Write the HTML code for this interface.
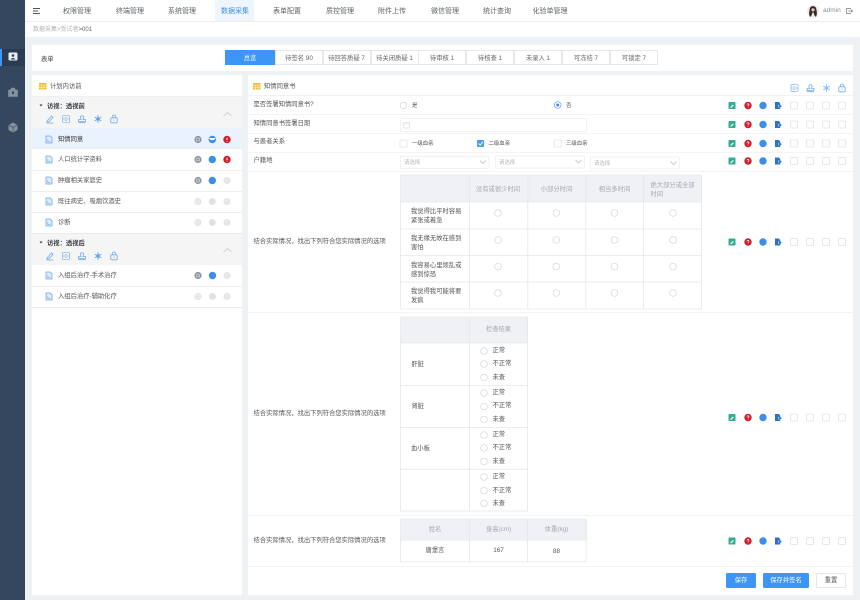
<!DOCTYPE html>
<html lang="zh">
<head>
<meta charset="utf-8">
<title>数据采集</title>
<style>
html,body{margin:0;padding:0;width:860px;height:600px;overflow:hidden;background:#eff2f5}
body{font-family:"Liberation Sans","Noto Sans CJK SC",sans-serif;font-size:7px;color:#555;position:relative}
#w{position:absolute;left:0;top:0;width:860px;height:600px;filter:blur(.25px)}
.b{position:absolute;background:#fff}
.t{position:absolute;white-space:nowrap;line-height:10px;height:10px;font-size:6.3px;color:#555;margin-top:1.5px}
.n{font-size:7px;color:#5f6368}
.c{transform:translateX(-50%)}
.h{color:#a3a8b3}
.d{color:#3a3f47}
.s{font-size:5.4px}
.g{color:#b5b8bd;font-size:5.4px}
svg{position:absolute;left:0;top:0;overflow:visible}
.tab{position:absolute;top:50px;height:15px;line-height:15px;text-align:center;background:#fff;border:1px solid #e6e8ec;box-sizing:border-box;font-size:6.3px;color:#666;width:48px}
.btn{position:absolute;top:573px;height:15px;line-height:15px;text-align:center;background:#3c96f5;color:#fff;border-radius:1.5px;font-size:6.3px}
</style>
</head>
<body>
<div id="w">
<div class="b" style="left:0;top:0;width:25px;height:600px;background:#34475e"></div>
<div class="b" style="left:0;top:49px;width:25px;height:17px;background:#2b3c50"></div>
<div class="b" style="left:0;top:49px;width:2px;height:17px;background:#3c96f5"></div>

<div class="b" style="left:25px;top:0;width:835px;height:37px"></div>
<div class="b" style="left:215px;top:0;width:39px;height:21px;background:#eef5fd"></div>
<div class="b" style="left:25px;top:21px;width:835px;height:1px;background:#eceef1"></div>

<div class="t c n" style="left:77px;top:5px">权限管理</div>
<div class="t c n" style="left:130px;top:5px">终端管理</div>
<div class="t c n" style="left:182px;top:5px">系统管理</div>
<div class="t c n" style="left:235px;top:5px;color:#3c8fe8">数据采集</div>
<div class="t c n" style="left:287px;top:5px">表单配置</div>
<div class="t c n" style="left:340px;top:5px">质控管理</div>
<div class="t c n" style="left:392px;top:5px">附件上传</div>
<div class="t c n" style="left:445px;top:5px">微信管理</div>
<div class="t c n" style="left:497px;top:5px">统计查询</div>
<div class="t c n" style="left:550px;top:5px">化验单管理</div>
<div class="t" style="left:823px;top:4px;font-size:6.5px;color:#8a8f96">admin</div>
<div class="t" style="left:33px;top:23.500px;font-size:6px;color:#b0b3b8">数据采集&gt;受试者<span style="color:#666">&gt;001</span></div>

<div class="b" style="left:32px;top:45px;width:821px;height:26px"></div>
<div class="t d" style="left:41px;top:53px">表单</div>
<div class="tab" style="left:225px;width:50px;background:#3c96f5;border-color:#3c96f5;color:#fff">总览</div>
<div class="tab" style="left:275px">待签名 90</div>
<div class="tab" style="left:322.500px">待回答质疑 7</div>
<div class="tab" style="left:370.500px">待关闭质疑 1</div>
<div class="tab" style="left:418px">待审核 1</div>
<div class="tab" style="left:466px">待核查 1</div>
<div class="tab" style="left:514px">未录入 1</div>
<div class="tab" style="left:562px">可冻结 7</div>
<div class="tab" style="left:610px">可锁定 7</div>

<!-- left panel -->
<div class="b" style="left:32px;top:75px;width:210px;height:520px"></div>
<div class="b" style="left:32px;top:96px;width:210px;height:1px;background:#eef0f2"></div>
<div class="b" style="left:32px;top:97px;width:210px;height:31px;background:#f5f5f6"></div>
<div class="b" style="left:32px;top:128px;width:210px;height:20px;background:#eaf3fd"></div>
<div class="b" style="left:32px;top:233px;width:210px;height:32px;background:#f5f5f6"></div>
<div class="b" style="left:32px;top:148px;width:210px;height:1px;background:#edeff2"></div>
<div class="b" style="left:32px;top:170px;width:210px;height:1px;background:#edeff2"></div>
<div class="b" style="left:32px;top:191px;width:210px;height:1px;background:#edeff2"></div>
<div class="b" style="left:32px;top:212px;width:210px;height:1px;background:#edeff2"></div>
<div class="b" style="left:32px;top:233px;width:210px;height:1px;background:#e8eaed"></div>
<div class="b" style="left:32px;top:286px;width:210px;height:1px;background:#edeff2"></div>
<div class="b" style="left:32px;top:307px;width:210px;height:1px;background:#e8eaed"></div>

<div class="t" style="left:50px;top:80px">计划内访前</div>
<div class="t d" style="left:47px;top:100px;font-weight:bold">访视：透视前</div>
<div class="t d" style="left:47px;top:237px;font-weight:bold">访视：透视后</div>
<div class="t d" style="left:58px;top:133px;color:#333">知情同意</div>
<div class="t" style="left:58px;top:153px">人口统计学资料</div>
<div class="t" style="left:58px;top:174px">肿瘤相关家庭史</div>
<div class="t" style="left:58px;top:195px">既往病史、吸烟饮酒史</div>
<div class="t" style="left:58px;top:216px">诊断</div>
<div class="t" style="left:58px;top:269px">入组后治疗-手术治疗</div>
<div class="t" style="left:58px;top:290.500px">入组后治疗-辅助化疗</div>

<!-- right panel -->
<div class="b" style="left:248px;top:75px;width:605px;height:520px"></div>
<div class="t" style="left:264px;top:80px">知情同意书</div>
<div class="b" style="left:248px;top:95px;width:605px;height:1px;background:#f1f2f4"></div>
<div class="b" style="left:248px;top:114px;width:605px;height:1px;background:#f3f4f6"></div>
<div class="b" style="left:248px;top:133px;width:605px;height:1px;background:#f3f4f6"></div>
<div class="b" style="left:248px;top:152px;width:605px;height:1px;background:#f3f4f6"></div>
<div class="b" style="left:248px;top:171px;width:605px;height:1px;background:#f3f4f6"></div>
<div class="b" style="left:248px;top:312px;width:605px;height:1px;background:#f3f4f6"></div>
<div class="b" style="left:248px;top:515px;width:605px;height:1px;background:#f3f4f6"></div>
<div class="b" style="left:248px;top:566px;width:605px;height:1px;background:#f3f4f6"></div>

<div class="t" style="left:253.500px;top:98.500px">是否签署知情同意书?</div>
<div class="t" style="left:253.500px;top:117.500px">知情同意书签署日期</div>
<div class="t" style="left:253.500px;top:135.500px">与患者关系</div>
<div class="t" style="left:253.500px;top:154.500px">户籍地</div>
<div class="t" style="left:253.500px;top:235.500px">结合实际情况，找出下列符合您实际情况的选项</div>
<div class="t" style="left:253.500px;top:407.500px">结合实际情况，找出下列符合您实际情况的选项</div>
<div class="t" style="left:253.500px;top:534.500px">结合实际情况，找出下列符合您实际情况的选项</div>

<div class="t s" style="left:412px;top:99px">是</div>
<div class="t s" style="left:566px;top:99px">否</div>
<div class="t s" style="left:412px;top:137px">一级血亲</div>
<div class="t s" style="left:488.500px;top:137px">二级血亲</div>
<div class="t s" style="left:566px;top:137px">三级血亲</div>

<!-- table 1 -->
<div class="b" style="left:400.500px;top:175px;width:301px;height:27px;background:#f0f1f4"></div>
<div class="t c h" style="left:498px;top:183.500px">没有或很少时间</div>
<div class="t c h" style="left:556.500px;top:183.500px">小部分时间</div>
<div class="t c h" style="left:614.500px;top:183.500px">相当多时间</div>
<div class="t h" style="left:650.500px;top:179px">绝大部分或全部</div>
<div class="t h" style="left:650.500px;top:188px">时间</div>
<div class="t" style="left:411px;top:205px">我觉得比平时容易</div>
<div class="t" style="left:411px;top:214px">紧张或着急</div>
<div class="t" style="left:411px;top:232px">我无缘无故在感到</div>
<div class="t" style="left:411px;top:241px">害怕</div>
<div class="t" style="left:411px;top:259px">我容易心里烦乱或</div>
<div class="t" style="left:411px;top:268px">感到惊恐</div>
<div class="t" style="left:411px;top:285px">我觉得我可能将要</div>
<div class="t" style="left:411px;top:294px">发疯</div>

<!-- table 2 -->
<div class="b" style="left:400.500px;top:317px;width:127px;height:26px;background:#f0f1f4"></div>
<div class="t c h" style="left:498.500px;top:323.500px">检查结果</div>
<div class="t" style="left:411.500px;top:358.500px">肝脏</div>
<div class="t" style="left:411.500px;top:400.500px">肾脏</div>
<div class="t" style="left:411px;top:442.500px">血小板</div>
<div class="t" style="left:492.500px;top:344px">正常</div><div class="t" style="left:492.500px;top:357.500px">不正常</div><div class="t" style="left:492.500px;top:371px">未查</div>
<div class="t" style="left:492.500px;top:386px">正常</div><div class="t" style="left:492.500px;top:399.500px">不正常</div><div class="t" style="left:492.500px;top:413px">未查</div>
<div class="t" style="left:492.500px;top:428px">正常</div><div class="t" style="left:492.500px;top:441.500px">不正常</div><div class="t" style="left:492.500px;top:455px">未查</div>
<div class="t" style="left:492.500px;top:470.500px">正常</div><div class="t" style="left:492.500px;top:484px">不正常</div><div class="t" style="left:492.500px;top:497px">未查</div>

<!-- table 3 -->
<div class="b" style="left:400.500px;top:519px;width:186px;height:21px;background:#f0f1f4"></div>
<div class="t c h" style="left:435px;top:523.500px">姓名</div>
<div class="t c h" style="left:498.500px;top:523.500px">身高(cm)</div>
<div class="t c h" style="left:556.500px;top:523.500px">体重(kg)</div>
<div class="t c" style="left:435px;top:544.500px">唐堡言</div>
<div class="t c" style="left:498.500px;top:544.500px">167</div>
<div class="t c" style="left:556.500px;top:545.500px">88</div>

<div class="btn" style="left:726px;width:30px">保存</div>
<div class="btn" style="left:763px;width:46px">保存并签名</div>
<div class="btn" style="left:816px;width:30px;background:#fff;color:#555;border:1px solid #e4e6ea;box-sizing:border-box;line-height:13px">重置</div>

<svg width="860" height="600" viewBox="0 0 860 600" fill="none">
<defs>
<g id="edit"><rect x="-3.500" y="-3.500" width="7" height="7" rx=".8" fill="#35ab90"/><path d="M-1.800 1.800L.9-1l.9.8L-.9 2.400z" fill="#fff"/></g>
<g id="q"><circle r="3.700" fill="#cf1f2a"/><path d="M-1-.8a1 1 0 1 1 1.500.9c-.4.2-.5.4-.5.8M0 1.700v.4" stroke="#fff" stroke-width=".7"/></g>
<g id="dot"><circle r="3.700" fill="#3c8fe8"/></g>
<g id="doc"><path d="M-3-3.500H.8L2.200-2V-.8L3.800.6 2.200 2V3.500H-3z" fill="#2d72c4"/><path d="M.8-.8V2" stroke="#fff" stroke-width=".6"/></g>
<g id="cb"><rect x="-3.500" y="-3.500" width="7" height="7" rx="1" fill="#fff" stroke="#dfe1e5" stroke-width=".8"/></g>
<g id="ra"><circle r="3.300" fill="#fff" stroke="#d3d5d9" stroke-width=".7"/></g>
<g id="pen" stroke="#6fa9e8" stroke-width=".8"><path d="M-3 2L1.500-3 3-1.500-1.500 3H-3zM-3.500 4H3.500"/></g>
<g id="scan" stroke="#8fbdee" stroke-width=".8"><rect x="-3.500" y="-3.500" width="7" height="7" rx="1"/><path d="M-3.500 0H3.500M-1-1.500h2M-1 1.500h2"/></g>
<g id="stamp" stroke="#6fa9e8" stroke-width=".8"><path d="M-1.500-1c-1-3 4-3 3 0L1 .5H3.500V2.500H-3.500V.5H-1zM-3.500 3.700H3.500"/></g>
<g id="snow" stroke="#5da2ea" stroke-width=".9"><path d="M0-3.800V3.800M-3.300-1.900L3.300 1.900M-3.300 1.900L3.300-1.900"/><circle r="1.200" fill="#5da2ea"/></g>
<g id="lock" stroke="#6fa9e8" stroke-width=".8"><rect x="-3.200" y="-1.200" width="6.400" height="5" rx=".8"/><path d="M-1.700-1.200V-2.300a1.700 1.700 0 0 1 3.400 0V-1.200M0 .6v1.200"/></g>
<g id="fdoc"><path d="M-3-3.500H1.200L3-1.700V3.500H-3z" fill="#dfecfa" stroke="#6fa9e8" stroke-width=".8"/><path d="M-1.200-.3V1.800H1.200" stroke="#6fa9e8" stroke-width=".6"/></g>
<g id="s1"><circle r="3.600" fill="#8f96a3"/><circle r="1.600" fill="none" stroke="#dfe1e5" stroke-width=".6"/></g>
<g id="s1o"><circle r="3.500" fill="#e4e5e7"/><circle r="1.600" fill="none" stroke="#f2f2f3" stroke-width=".6"/></g>
<g id="s2"><circle r="3.700" fill="#3c8fe8"/></g>
<g id="s2o"><circle r="3.500" fill="#e0e1e3"/></g>
<g id="s3"><circle r="3.700" fill="#cf1f2a"/><path d="M0-2V.6M0 1.400v.7" stroke="#fff" stroke-width=".9"/></g>
<g id="s3o"><circle r="3.500" fill="#e4e5e7"/><path d="M0-2V.6M0 1.400v.7" stroke="#f6f6f7" stroke-width=".9"/></g>
<g id="grid"><rect x="0" y="0" width="7.500" height="6.500" fill="#f5b82e"/><path d="M0 2H7.500M0 4.200H7.500M2.500 2V6.500M5 2V6.500" stroke="#fff" stroke-width=".5"/></g>
<g id="row"><use href="#edit" x="732"/><use href="#q" x="748"/><use href="#dot" x="763"/><use href="#doc" x="778"/><use href="#cb" x="794"/><use href="#cb" x="810"/><use href="#cb" x="826"/><use href="#cb" x="842"/></g>
<g id="tools"><use href="#pen" x="50"/><use href="#scan" x="66"/><use href="#stamp" x="82"/><use href="#snow" x="98"/><use href="#lock" x="114"/></g>
</defs>

<!-- hamburger -->
<path d="M33 8.500H40M33 11H38M33 13.500H40" stroke="#555" stroke-width=".9"/>
<!-- avatar -->
<circle cx="813" cy="11" r="6" fill="#f2ece8"/>
<path d="M810 17c-1.500-3-.8-6 0-9 1-2.500 5-2.500 6 0 .8 3 1.500 6 0 9l-1.500-1.500-1.500-4-1.500 4z" fill="#3a2a28"/>
<circle cx="813" cy="9.800" r="1.600" fill="#e9c9b8"/>
<!-- logout -->
<path d="M851 8.500H846.500V13.500H851M848.500 11H852.500M851.300 9.800L852.500 11 851.300 12.200" stroke="#777" stroke-width=".7"/>

<!-- sidebar icons -->
<rect x="8.500" y="52.500" width="9" height="8" rx="1.200" fill="#e9edf2"/><circle cx="13" cy="55.500" r="1.300" fill="#2b3c50"/><path d="M10.800 59.500c.3-2 4.100-2 4.400 0z" fill="#2b3c50"/>
<path d="M8.500 90H17.500V96.500H8.500zM10.500 90L11.500 88H14.500L15.500 90" fill="#8391a1" stroke="#8391a1" stroke-width=".6"/><rect x="12" y="91.500" width="2" height="2.500" fill="#34475e"/>
<path d="M13 122.500L17.500 125V130L13 132.500 8.500 130V125z" fill="#8391a1"/><path d="M8.800 125L13 127.500 17.200 125M13 127.500V132" stroke="#34475e" stroke-width=".6"/>

<!-- panel headers -->
<use href="#grid" x="39" y="83"/>
<use href="#grid" x="253" y="83"/>
<use href="#scan" x="794.500" y="88"/><use href="#stamp" x="810.500" y="88"/><use href="#snow" x="826.500" y="88" opacity=".7"/><use href="#lock" x="842" y="88"/>

<!-- left panel -->
<path d="M39.500 104.500H42.500L41 106.500z" fill="#333"/>
<path d="M39.500 241.500H42.500L41 243.500z" fill="#333"/>
<use href="#tools" y="119"/>
<use href="#tools" y="256"/>
<path d="M223.500 116L227.500 112.500 231.500 116" stroke="#c4c6ca" stroke-width=".7"/>
<path d="M223.500 252L227.500 248.500 231.500 252" stroke="#c4c6ca" stroke-width=".7"/>

<use href="#fdoc" x="49" y="139.500"/><use href="#fdoc" x="49" y="159.500"/><use href="#fdoc" x="49" y="180.500"/><use href="#fdoc" x="49" y="201.500"/><use href="#fdoc" x="49" y="222.500"/><use href="#fdoc" x="49" y="275.500"/><use href="#fdoc" x="49" y="296.500"/>

<use href="#s1" x="198" y="139.500"/>
<circle cx="212.300" cy="139.500" r="3.700" fill="#3c8fe8"/><path d="M209.200 138a3.100 2.200 0 0 0 6.200 0z" fill="#fff"/>
<use href="#s3" x="227" y="139.500"/>
<use href="#s1" x="198" y="159.500"/><use href="#s2" x="212.300" y="159.500"/><use href="#s3" x="227" y="159.500"/>
<use href="#s1" x="198" y="180.500"/><use href="#s2" x="212.300" y="180.500"/><use href="#s3o" x="227" y="180.500"/>
<use href="#s1o" x="198" y="201.500"/><use href="#s2o" x="212.300" y="201.500"/><use href="#s3o" x="227" y="201.500"/>
<use href="#s1o" x="198" y="222.500"/><use href="#s2o" x="212.300" y="222.500"/><use href="#s3o" x="227" y="222.500"/>
<use href="#s1" x="198" y="275.500"/><use href="#s2" x="212.500" y="275.500"/><use href="#s3o" x="227" y="275.500"/>
<use href="#s1o" x="198" y="296.500"/><use href="#s2o" x="212.500" y="296.500"/><use href="#s3o" x="227" y="296.500"/>

<!-- right rows -->
<use href="#row" y="105.500"/><use href="#row" y="124.500"/><use href="#row" y="143.500"/><use href="#row" y="161"/><use href="#row" y="242"/><use href="#row" y="417.500"/><use href="#row" y="541"/>

<!-- form controls -->
<use href="#ra" x="403.500" y="105.500"/>
<circle cx="557.700" cy="105" r="3.300" fill="#fff" stroke="#5da2ea" stroke-width=".7"/><circle cx="557.700" cy="105" r="1.500" fill="#3c8fe8"/>
<rect x="400.500" y="118.500" width="186" height="13" rx="1" fill="#fff" stroke="#eceef1" stroke-width=".8"/>
<rect x="403.500" y="122.500" width="6" height="5.500" stroke="#d5d7db" stroke-width=".6"/><path d="M403.500 124H409.500" stroke="#d5d7db" stroke-width=".6"/>
<use href="#cb" x="403.500" y="143.500"/>
<rect x="477" y="140" width="7" height="7" rx="1" fill="#4b9cf0"/><path d="M478.500 143.500L480.200 145.200 482.800 141.800" stroke="#fff" stroke-width=".9"/>
<use href="#cb" x="557.700" y="143.500"/>
<rect x="400.500" y="156.300" width="88.500" height="12" rx="1" fill="#fff" stroke="#eceef1" stroke-width=".8"/><path d="M480 160.500L483 163.500 486 160.500" stroke="#b5b8bd" stroke-width=".7"/>
<rect x="495.500" y="156" width="89" height="12" rx="1" fill="#fff" stroke="#eceef1" stroke-width=".8"/><path d="M575.500 160L578.500 163 581.500 160" stroke="#b5b8bd" stroke-width=".7"/>
<rect x="590.500" y="157" width="89" height="12" rx="1" fill="#fff" stroke="#eceef1" stroke-width=".8"/><path d="M670.500 161.500L673.500 164.500 676.500 161.500" stroke="#b5b8bd" stroke-width=".7"/>

<!-- table 1 lines -->
<g stroke="#e6e7ea" stroke-width=".8">
<path d="M400.500 175H701.500M400.500 202H701.500M400.500 229H701.500M400.500 255.500H701.500M400.500 282H701.500M400.500 309H701.500"/>
<path d="M400.500 175V309M469.500 175V309M527.800 175V309M585.800 175V309M643.500 175V309M701.500 175V309"/>
</g>
<g><use href="#ra" x="498" y="213"/><use href="#ra" x="556.300" y="213"/><use href="#ra" x="614.500" y="213"/><use href="#ra" x="673" y="213"/>
<use href="#ra" x="498" y="240"/><use href="#ra" x="556.300" y="240"/><use href="#ra" x="614.500" y="240"/><use href="#ra" x="673" y="240"/>
<use href="#ra" x="498" y="266.500"/><use href="#ra" x="556.300" y="266.500"/><use href="#ra" x="614.500" y="266.500"/><use href="#ra" x="673" y="266.500"/>
<use href="#ra" x="498" y="293"/><use href="#ra" x="556.300" y="293"/><use href="#ra" x="614.500" y="293"/><use href="#ra" x="673" y="293"/></g>

<!-- table 2 lines -->
<g stroke="#e6e7ea" stroke-width=".8">
<path d="M400.500 317H527.500M400.500 343H527.500M400.500 385.500H527.500M400.500 427.500H527.500M400.500 469.300H527.500M400.500 511H527.500"/>
<path d="M400.500 317V511M469.500 317V511M527.500 317V511"/>
</g>
<use href="#ra" x="484" y="351"/><use href="#ra" x="484" y="364"/><use href="#ra" x="484" y="377.500"/>
<use href="#ra" x="484" y="393"/><use href="#ra" x="484" y="406.500"/><use href="#ra" x="484" y="419.500"/>
<use href="#ra" x="484" y="435"/><use href="#ra" x="484" y="448"/><use href="#ra" x="484" y="461.500"/>
<use href="#ra" x="484" y="477"/><use href="#ra" x="484" y="490.500"/><use href="#ra" x="484" y="503.500"/>

<!-- table 3 lines -->
<g stroke="#e6e7ea" stroke-width=".8">
<path d="M400.500 519H586M400.500 540H586M400.500 562H586"/>
<path d="M400.500 519V562M469.500 519V562M527.500 519V562M586 519V562"/>
</g>
</svg>
<div class="t g" style="left:404px;top:156px">请选择</div>
<div class="t g" style="left:499px;top:156px">请选择</div>
<div class="t g" style="left:594px;top:157px">请选择</div>
</div>
</body>
</html>
